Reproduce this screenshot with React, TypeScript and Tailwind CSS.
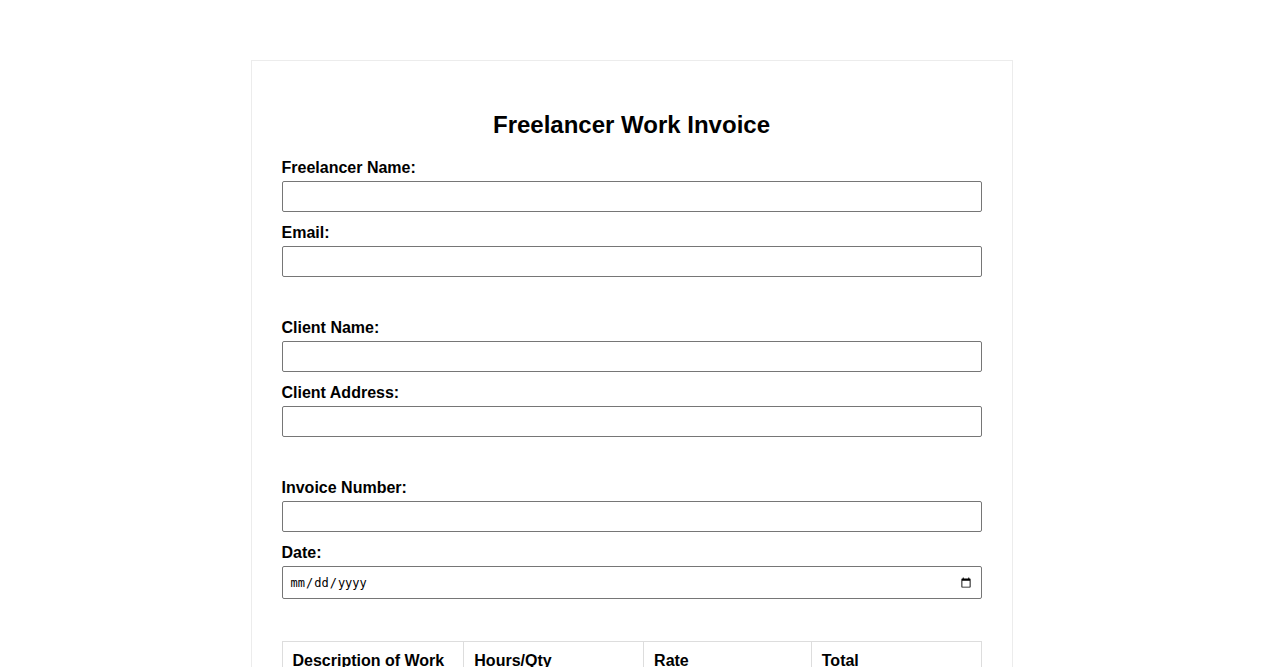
import React from "react";

function Field({ label, type = "text", last = false }: { label: string; type?: string; last?: boolean }) {
  return (
    <div className={last ? "mb-[40px]" : "mb-[10px]"}>
      <label className="block text-[16px] leading-[22px] font-bold mb-[2px] text-black">{label}</label>
      <input
        type={type}
        className="block w-full h-[31px] border border-[#767676] rounded-[2px] px-[7px] text-[13px] bg-white"
      />
    </div>
  );
}

export default function App() {
  return (
    <div className="min-h-screen bg-white font-['Liberation_Sans',Arial,sans-serif] text-black pt-[60px] pb-[40px]">
      <div className="mx-auto w-[762px] border border-[#ececec] p-[30px] bg-white">
        <h2 className="text-[24px] leading-[28px] font-bold text-center mt-[20px] mb-[18px]">Freelancer Work Invoice</h2>

        <Field label="Freelancer Name:" />
        <Field label="Email:" type="email" last />

        <Field label="Client Name:" />
        <Field label="Client Address:" last />

        <Field label="Invoice Number:" />
        <div className="mb-[42px]">
          <label className="block text-[16px] leading-[22px] font-bold mb-[2px] text-black">Date:</label>
          <input
            type="date"
            className="block w-full h-[33px] border border-[#767676] rounded-[2px] px-[7px] text-[12px] font-['DejaVu_Sans_Mono',monospace] text-black bg-white"
          />
        </div>

        <table className="w-full border-collapse">
          <thead>
            <tr>
              <th className="w-[182px] border border-[#dddddd] p-[10px] text-left text-[16px] leading-[18px] font-bold">Description of Work</th>
              <th className="w-[180px] border border-[#dddddd] p-[10px] text-left text-[16px] leading-[18px] font-bold">Hours/Qty</th>
              <th className="w-[168px] border border-[#dddddd] p-[10px] text-left text-[16px] leading-[18px] font-bold">Rate</th>
              <th className="w-[170px] border border-[#dddddd] p-[10px] text-left text-[16px] leading-[18px] font-bold">Total</th>
            </tr>
          </thead>
          <tbody>
            <tr>
              <td className="border border-[#dddddd] p-[10px]"><input type="text" className="w-full h-[31px] border border-[#767676] rounded-[2px] px-[7px]" /></td>
              <td className="border border-[#dddddd] p-[10px]"><input type="number" className="w-full h-[31px] border border-[#767676] rounded-[2px] px-[7px]" /></td>
              <td className="border border-[#dddddd] p-[10px]"><input type="number" className="w-full h-[31px] border border-[#767676] rounded-[2px] px-[7px]" /></td>
              <td className="border border-[#dddddd] p-[10px]"><input type="text" className="w-full h-[31px] border border-[#767676] rounded-[2px] px-[7px]" /></td>
            </tr>
          </tbody>
        </table>
      </div>
    </div>
  );
}
